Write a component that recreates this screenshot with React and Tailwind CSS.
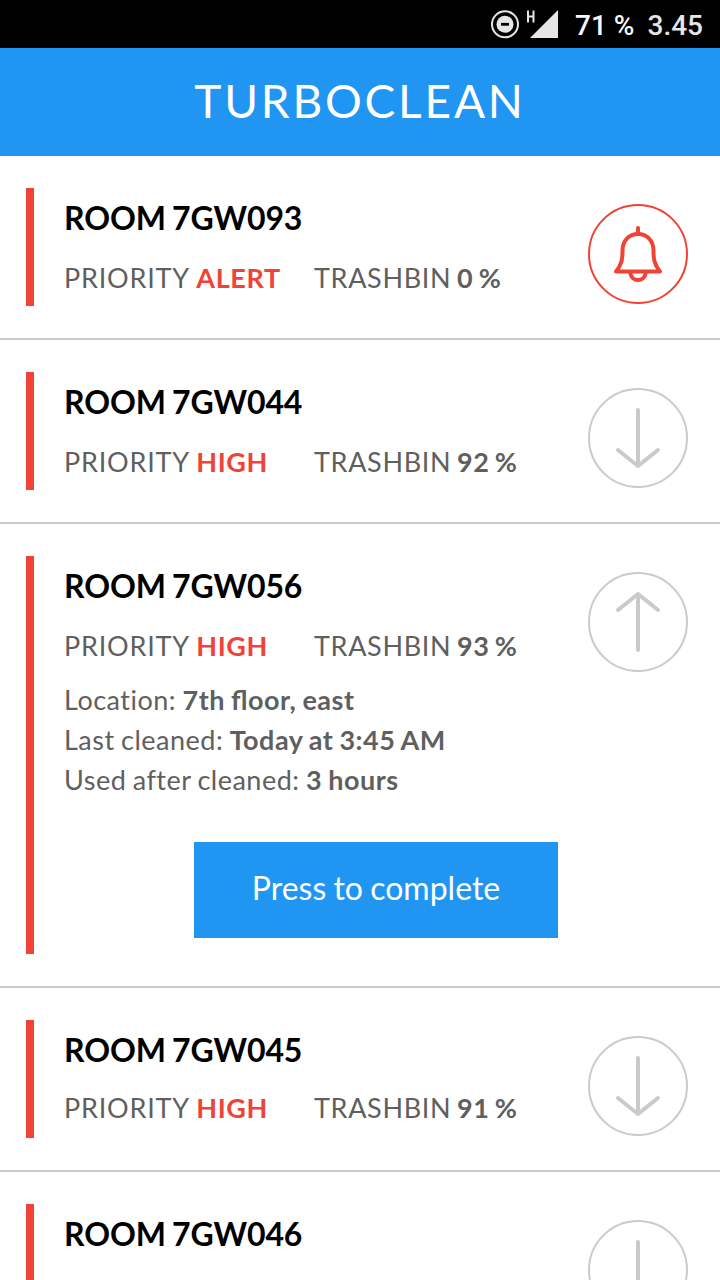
const rooms = [
  { id: '7GW093', priority: 'ALERT', trashbin: 0, alert: true },
  { id: '7GW044', priority: 'HIGH', trashbin: 92 },
  {
    id: '7GW056',
    priority: 'HIGH',
    trashbin: 93,
    open: true,
    details: [
      { label: 'Location', value: '7th floor, east' },
      { label: 'Last cleaned', value: 'Today at 3:45 AM' },
      { label: 'Used after cleaned', value: '3 hours' }
    ]
  },
  { id: '7GW045', priority: 'HIGH', trashbin: 91, compact: true },
  { id: '7GW046' }
];

function StatusBar() {
  return (
    <div className="flex h-12 items-center justify-end bg-black pr-[17px] font-[Roboto,sans-serif] text-[28px] font-medium text-[#e6e6e6]">
      <svg className="h-12 w-[70px]" viewBox="490 0 70 48" fill="none">
        <circle cx="505" cy="24.3" r="13" stroke="#e6e6e6" strokeWidth="2" />
        <circle cx="505" cy="24.3" r="8.5" fill="#e6e6e6" />
        <path d="M501 24.300h8" stroke="#000000" strokeWidth="2.800" />
        <path d="M528 10.500v12M533.500 10.500v12M528 16.500h6" stroke="#e6e6e6" strokeWidth="2" />
        <path d="M558 10v28h-28z" fill="#e6e6e6" />
      </svg>
      <span className="ml-[15px] pt-[3px] text-[#f8f8f8]">71 %</span>
      <span className="ml-[13px] pt-[3px]">3.45</span>
    </div>
  );
}

function StateIcon({ alert, open }) {
  if (alert) {
    return (
      <svg className="size-[100px] shrink-0" viewBox="0 0 100 100" fill="none" stroke="#f04335" strokeLinecap="round" strokeLinejoin="round">
        <circle cx="50" cy="50" r="49" strokeWidth="2" />
        <path d="M50 24v6" strokeWidth="4" />
        <path d="M28 67.500C34 60.500 34.500 54 34.500 47 34.500 36 41.500 30 50 30s15.500 6 15.500 17c0 7 .5 13.500 6.500 20.500z" strokeWidth="4" />
        <path d="M42.300 69c1.200 9.300 14.200 9.300 15.400 0" strokeWidth="4" />
      </svg>
    );
  }
  return (
    <svg className="size-[100px] shrink-0" viewBox="0 0 100 100" fill="none" stroke="#cacaca" strokeLinecap="round" strokeLinejoin="round">
      <circle cx="50" cy="50" r="49" strokeWidth="2" />
      <path d={open ? 'M50 78V22M30 38l20-16 20 16' : 'M50 22v56M30 62l20 16 20-16'} strokeWidth="4" />
    </svg>
  );
}

function RoomCard({ room }) {
  return (
    <div className="flex border-b-2 border-[#cacaca] pt-8 pr-8 pb-8 pl-[26px]">
      <div className="w-2 shrink-0 bg-[#f04335]" />
      <div className={`ml-[30px] flex-1 ${room.open ? 'h-[398px]' : 'h-[118px]'}`}>
        <h2 className="mt-[10px] text-[32px] leading-10 font-bold tracking-[-0.1px] text-black [word-spacing:-1.5px]">ROOM {room.id}</h2>
        {room.priority && (
          <div className={`flex text-[27px] leading-10 ${room.compact ? 'mt-[18px]' : 'mt-5'}`}>
            <p className="w-[250px] tracking-[0.8px] [word-spacing:-0.3px]">PRIORITY <b className="tracking-[0.6px] text-[#f04335]">{room.priority}</b></p>
            <p className="tracking-[0.65px] [word-spacing:-1.7px]">TRASHBIN <b className="tracking-[0.5px]">{room.trashbin} %</b></p>
          </div>
        )}
        {room.open && (
          <>
            <div className="mt-[14px] text-[27px] leading-10 tracking-[0.5px] [word-spacing:-1px]">
              {room.details.map((d) => (
                <p key={d.label}>{d.label}: <b className="[font-feature-settings:'liga'_1]">{d.value}</b></p>
              ))}
            </div>
            <button className="mt-[42px] ml-[130px] h-24 w-[364px] bg-[#2095f2] pb-1 text-[32px] text-white [word-spacing:-1px]">Press to complete</button>
          </>
        )}
      </div>
      <div className="-ml-[100px] pt-4">
        <StateIcon alert={room.alert} open={room.open} />
      </div>
    </div>
  );
}

export default function App() {
  return (
    <div className="h-[1280px] w-[720px] overflow-hidden bg-white font-[Lato,sans-serif] text-[#5f5f5f]">
      <StatusBar />
      <header className="flex h-[108px] items-center justify-center bg-[#2095f2] pb-1 text-[46px] tracking-[2.8px] text-white">TURBOCLEAN</header>
      {rooms.map((room) => <RoomCard key={room.id} room={room} />)}
    </div>
  );
}
